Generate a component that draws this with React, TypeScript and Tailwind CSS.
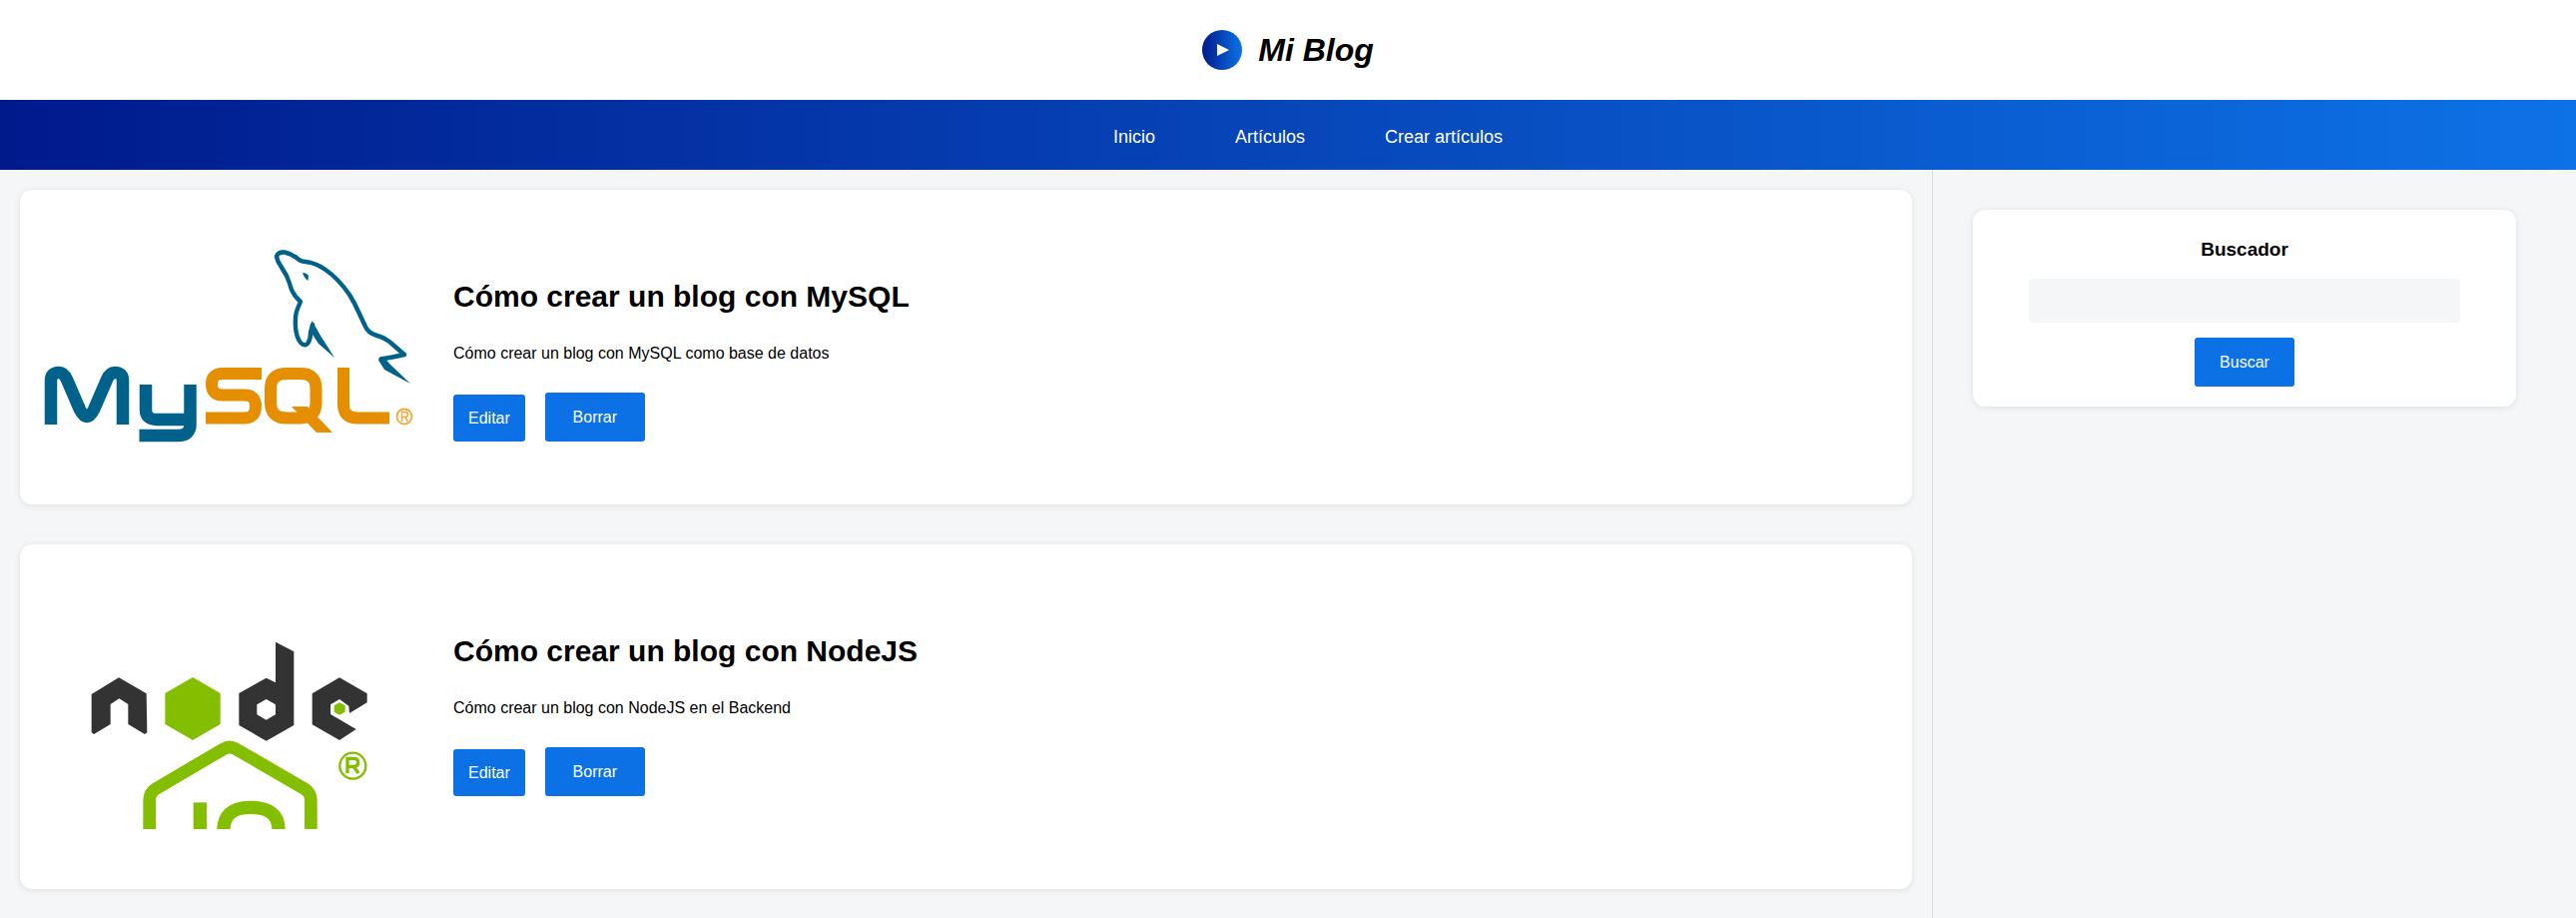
function MysqlLogo() {
  return (
    <svg viewBox="40 240 380 210" className="block w-[380px] h-[210px] mt-[30px] mb-[35px]">
      {/* dolphin */}
      <g fill="none" stroke="#00618a" strokeWidth="4.4" strokeLinejoin="round" strokeLinecap="round">
        <path d="M277 257 Q278 252 285 252.5 Q292 254 297 258 Q300 261.5 306 262 Q316 263 326 270 Q339 279 350 295 Q355 303 359 312 L366 327 Q369 333 375 335 Q383 337 390 342 L405 355 L393 357.5 L381.5 359.5" />
        <path d="M277 257 Q278 262 281 266 L287 276 Q290 283 292 290 Q295 297 301 302 L298 309 Q295 316 296 328 Q297 338 301 343 Q305 347 308 344 Q311 340 311 333 L313 325" />
      </g>
      <path d="M310.5 331 L312.5 321 L321 336 L335 358 L319 344 Z" fill="#00618a" />
      <path d="M379 360.5 L384 357 L391 365 L411 384 L385 370 Z" fill="#00618a" />
      <path d="M303 273 Q307 273 309 276 L308.5 281 Q305 279 303 273 Z" fill="#00618a" />
      {/* My */}
      <g fill="none" stroke="#00618a" strokeWidth="12.5">
        <path d="M51 425 V381 Q51 373 59 373 Q64 373 67 380 L80 410 Q87 424 94 410 L107 380 Q110 373 115 373 Q123 373 123 381 V425" />
        <path d="M146 385 V410 Q146 420 157 420 H190" />
        <path d="M190.5 385 V425 Q190.5 436 178 436 H139.5" />
      </g>
      {/* SQL */}
      <g fill="none" stroke="#e48e00" strokeWidth="12">
        <path d="M262 374 H223 Q212 374 212 384.5 Q212 395.5 223 395.5 H245 Q256 395.5 256 406.5 Q256 418.5 245 418.5 H206" />
        <path d="M287 374 H301 Q316.5 374 316.5 389 V403 Q316.5 418.5 301 418.5 H287 Q271 418.5 271 403 V389 Q271 374 287 374 Z" />
        <path d="M344 368 V405 Q344 418.5 358 418.5 H390" />
      </g>
      <path d="M292 407 L308 407 L333 433 L317 433 Z" fill="#e48e00" />
      <circle cx="405" cy="417" r="7.5" fill="none" stroke="#f0a83e" strokeWidth="1.8" />
      <path d="M402.5 422 V412.5 H406 Q408.5 412.5 408.5 415 Q408.5 417.5 406 417.5 H402.5 M405.5 417.5 L408.5 422" fill="none" stroke="#f0a83e" strokeWidth="1.5" />
    </svg>
  );
}

function NodeLogo() {
  return (
    <svg viewBox="120 120 900 570" className="block w-[300px] h-[190px] mt-[75px] mb-10 ml-10 mr-10">
      <path d="M155 285 L237 235 L320 283 L322 400 L315 405 L265 375 L265 315 L238 298 L212 315 L212 375 L162 405 L155 400 Z" fill="#333333" />
      <path d="M459 234 L542 282 L542 375 L459 423 L376 375 L376 282 Z" fill="#83bf00" />
      <path
        fillRule="evenodd"
        d="M708 128 L763 157 L763 378 L680 425 L598 378 L598 282 L680 236 L708 250 Z M680 300 L708 316 L708 346 L680 362 L652 346 L652 316 Z"
        fill="#333333"
      />
      <path d="M900 235 L983 283 L983 310 L930 342 L928 320 L900 300 L873 316 L873 345 L950 390 L900 423 L818 376 L818 283 Z" fill="#333333" />
      <path d="M900 310 L917 319 L917 338 L900 347 L884 338 L884 319 Z" fill="#83bf00" />
      <g fill="none" stroke="#83bf00">
        <circle cx="940" cy="500" r="39" strokeWidth="7" />
        <path d="M924 522 V478 H944 Q956 478 956 490 Q956 502 944 502 H924 M942 502 L957 522" strokeWidth="10" />
        <path d="M329 700 V604 Q329 580 348 569 L552 449 Q570 439 588 449 L795 569 Q814 580 814 604 V700" strokeWidth="38" />
        <path d="M481 610 V700" strokeWidth="40" />
        <path d="M552 700 Q548 625 632 625 Q716 625 717 690" strokeWidth="40" />
      </g>
    </svg>
  );
}

function Post({ title, text, logo }: { title: string; text: string; logo: React.ReactNode }) {
  return (
    <article className="flex items-start p-5 bg-white rounded-xl shadow-[0_1px_6px_rgba(0,0,0,0.1)]">
      <div className="w-[380px] shrink-0">{logo}</div>
      <div className="ml-[34px] mt-[69px]">
        <h2 className="text-[30px] leading-[36px] font-bold text-black">{title}</h2>
        <p className="mt-[30px] text-base leading-[18px] text-black">{text}</p>
        <div className="flex items-end gap-5 mt-[30px]">
          <a className="flex items-center h-[47px] px-[15px] bg-[#0c71e5] text-white text-base rounded-[3px]">Editar</a>
          <button className="w-[100px] h-[49px] bg-[#0c71e5] text-white text-base rounded-[3px]">Borrar</button>
        </div>
      </div>
    </article>
  );
}

export default function App() {
  return (
    <div className="min-h-screen flex flex-col bg-[#f5f6f8] [font-family:'Liberation_Sans',Arial,sans-serif]">
      <header className="h-[100px] bg-white flex items-center justify-center gap-4">
        <div className="w-10 h-10 rounded-full bg-linear-to-r/srgb from-[#001a8c] to-[#0d72e6] flex items-center justify-center">
          <svg viewBox="0 0 12 12" className="w-3 h-3 ml-[2px]">
            <polygon points="0,0 12,6 0,12" fill="#ffffff" />
          </svg>
        </div>
        <h1 className="text-[32px] font-bold italic text-black">Mi Blog</h1>
      </header>

      <nav className="h-[70px] bg-linear-to-r/srgb from-[#001a8c] to-[#0d72e6] pl-10 pt-[3px] flex items-center justify-center gap-20 text-lg text-white">
        <a>Inicio</a>
        <a>Artículos</a>
        <a>Crear artículos</a>
      </nav>

      <div className="flex flex-1">
        <main className="w-[1936px] p-5 pb-0 border-r border-[#dcdee2] flex flex-col gap-10">
          <Post title="Cómo crear un blog con MySQL" text="Cómo crear un blog con MySQL como base de datos" logo={<MysqlLogo />} />
          <Post title="Cómo crear un blog con NodeJS" text="Cómo crear un blog con NodeJS en el Backend" logo={<NodeLogo />} />
        </main>
        <aside className="flex-1 pt-10 pl-10 pr-[60px]">
          <div className="flex flex-col items-center h-[197px] pt-[29px] bg-white rounded-xl shadow-[0_1px_6px_rgba(0,0,0,0.1)]">
            <h3 className="text-[19px] leading-[21px] font-bold text-black">Buscador</h3>
            <input className="w-[432px] h-11 mt-[19px] bg-[#f5f6f8] rounded" />
            <button className="w-[100px] h-[49px] mt-[15px] bg-[#0c71e5] text-white text-base rounded-[3px]">Buscar</button>
          </div>
        </aside>
      </div>
    </div>
  );
}
